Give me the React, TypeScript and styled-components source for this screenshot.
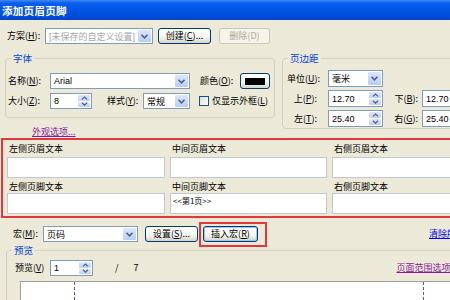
import styled, { createGlobalStyle } from "styled-components";

const GlobalStyle = createGlobalStyle`
  html, body {
    margin: 0;
    padding: 0;
    background: #ece9d8;
  }
  body {
    font-family: "Noto Sans CJK SC", "Liberation Sans", sans-serif;
    font-size: 9px;
    color: #000;
  }
`;

const Chevron = () => (
  <svg width="9" height="7" viewBox="0 0 9 7">
    <path d="M1.5 1.8 L4.5 4.8 L7.5 1.8" fill="none" stroke="#4d6185" strokeWidth="1.6" />
  </svg>
);

const SpinArrow = ({ up }: { up?: boolean }) => (
  <svg width="7" height="4" viewBox="0 0 7 4">
    <path
      d={up ? "M1 3.4 L3.5 1 L6 3.4" : "M1 0.8 L3.5 3.2 L6 0.8"}
      fill="none"
      stroke="#4d6185"
      strokeWidth="1.2"
    />
  </svg>
);

const App = () => {
  return (
    <Window>
      <GlobalStyle />
      <TitleBar>添加页眉页脚</TitleBar>

      {/* 方案 */}
      <Row $top={8} $left={7}>
        <Label $w={38}>
          方案(<u>H</u>):
        </Label>
        <Combo $w={108}>
          <ComboText $disabled>[未保存的自定义设置]</ComboText>
          <DropBtn>
            <Chevron />
          </DropBtn>
        </Combo>
        <Button $w={53} $ml={5}>
          创建(<u>C</u>)...
        </Button>
        <Button $w={51} $ml={8} disabled>
          删除(D)
        </Button>
      </Row>

      <GroupsRow>
        <LeftColumn>
          <Group $w={270} $h={66}>
            <Legend>字体</Legend>
            <Row $top={9} $left={2}>
              <Label $w={42}>
                名称(<u>N</u>):
              </Label>
              <Combo $w={140}>
                <ComboText>Arial</ComboText>
                <DropBtn>
                  <Chevron />
                </DropBtn>
              </Combo>
              <Label $w={40} $ml={10}>
                颜色(<u>O</u>):
              </Label>
              <ColorButton>
                <Swatch />
              </ColorButton>
            </Row>
            <Row $top={4} $left={2}>
              <Label $w={42}>
                大小(<u>Z</u>):
              </Label>
              <Spin $w={42}>
                <ComboText>8</ComboText>
                <SpinBtns>
                  <SpinHalf>
                    <SpinArrow up />
                  </SpinHalf>
                  <SpinHalf>
                    <SpinArrow />
                  </SpinHalf>
                </SpinBtns>
              </Spin>
              <Label $w={36} $ml={15}>
                样式(<u>Y</u>):
              </Label>
              <Combo $w={47}>
                <ComboText>常规</ComboText>
                <DropBtn>
                  <Chevron />
                </DropBtn>
              </Combo>
              <CheckBox $ml={9} />
              <Label $ml={3}>
                仅显示外框(<u>L</u>)
              </Label>
            </Row>
          </Group>
          <Link $visited $ml={27} $top={8}>
            外观选项...
          </Link>
        </LeftColumn>

        <Group $w={180} $h={77} $ml={7}>
          <Legend>页边距</Legend>
          <MarginRow $top={6}>
            <Label $w={30} $right>
              单位(<u>U</u>):
            </Label>
            <Combo $w={55} $ml={11} $h={17}>
              <ComboText>毫米</ComboText>
              <DropBtn>
                <Chevron />
              </DropBtn>
            </Combo>
          </MarginRow>
          <MarginRow $top={3}>
            <Label $w={30} $right>
              上(<u>P</u>):
            </Label>
            <Spin $w={55} $ml={11} $h={17}>
              <ComboText>12.70</ComboText>
              <SpinBtns>
                <SpinHalf>
                  <SpinArrow up />
                </SpinHalf>
                <SpinHalf>
                  <SpinArrow />
                </SpinHalf>
              </SpinBtns>
            </Spin>
            <Label $w={24} $ml={11} $right>
              下(<u>B</u>):
            </Label>
            <Spin $w={60} $ml={4} $h={17}>
              <ComboText>12.70</ComboText>
            </Spin>
          </MarginRow>
          <MarginRow $top={3}>
            <Label $w={30} $right>
              左(<u>T</u>):
            </Label>
            <Spin $w={55} $ml={11} $h={17}>
              <ComboText>25.40</ComboText>
              <SpinBtns>
                <SpinHalf>
                  <SpinArrow up />
                </SpinHalf>
                <SpinHalf>
                  <SpinArrow />
                </SpinHalf>
              </SpinBtns>
            </Spin>
            <Label $w={24} $ml={11} $right>
              右(<u>G</u>):
            </Label>
            <Spin $w={60} $ml={4} $h={17}>
              <ComboText>25.40</ComboText>
            </Spin>
          </MarginRow>
        </Group>
      </GroupsRow>

      {/* 页眉页脚文本 */}
      <HighlightBox>
        <TextGrid>
          <GridLabel>左侧页眉文本</GridLabel>
          <GridLabel>中间页眉文本</GridLabel>
          <GridLabel>右侧页眉文本</GridLabel>
          <TextBox />
          <TextBox />
          <TextBox />
          <GridLabel $end>左侧页脚文本</GridLabel>
          <GridLabel $end>中间页脚文本</GridLabel>
          <GridLabel $end>右侧页脚文本</GridLabel>
          <TextBox />
          <TextBox>&lt;&lt;第1页&gt;&gt;</TextBox>
          <TextBox />
        </TextGrid>
      </HighlightBox>

      {/* 宏 */}
      <Row $top={8} $left={13}>
        <Label $w={30}>
          宏(<u>M</u>):
        </Label>
        <Combo $w={95}>
          <ComboText>页码</ComboText>
          <DropBtn>
            <Chevron />
          </DropBtn>
        </Combo>
        <Button $w={53} $ml={7}>
          设置(<u>S</u>)...
        </Button>
        <ButtonHighlight>
          <Button $w={55} $focused>
            插入宏(<u>R</u>)
          </Button>
        </ButtonHighlight>
        <Link $ml={162}>清除所有宏</Link>
      </Row>

      <PreviewGroup>
        <Legend>预览</Legend>
        <Row $top={4} $left={8}>
          <Label $w={35}>
            预览(<u>V</u>)
          </Label>
          <Spin $w={43}>
            <ComboText>1</ComboText>
            <SpinBtns>
              <SpinHalf>
                <SpinArrow up />
              </SpinHalf>
              <SpinHalf>
                <SpinArrow />
              </SpinHalf>
            </SpinBtns>
          </Spin>
          <Label $ml={22}>/</Label>
          <Label $ml={15}>7</Label>
          <Link $visited $ml={258}>
            页面范围选项...
          </Link>
        </Row>
        <PreviewPage>
          <PageMargins />
        </PreviewPage>
      </PreviewGroup>
    </Window>
  );
};

export default App;

const Window = styled.div`
  width: 450px;
  height: 300px;
  overflow: hidden;
  background: #ece9d8;
`;

const TitleBar = styled.div`
  height: 20px;
  display: flex;
  align-items: center;
  padding-left: 2px;
  background: linear-gradient(
    to bottom,
    #3d8bf5 0%,
    #0a5eeb 15%,
    #0055e5 55%,
    #004ad8 85%,
    #0a43c2 100%
  );
  color: #fff;
  font-size: 10.5px;
  font-weight: bold;
  letter-spacing: 0.3px;
`;

const Row = styled.div<{ $top?: number; $left?: number }>`
  display: flex;
  align-items: center;
  height: 16px;
  margin-top: ${(p) => p.$top ?? 0}px;
  padding-left: ${(p) => p.$left ?? 0}px;
  white-space: nowrap;
`;

const MarginRow = styled(Row)`
  height: 17px;
  padding-left: 4px;
`;

const Label = styled.span<{ $w?: number; $ml?: number; $right?: boolean }>`
  flex-shrink: 0;
  width: ${(p) => (p.$w ? `${p.$w}px` : "auto")};
  margin-left: ${(p) => p.$ml ?? 0}px;
  text-align: ${(p) => (p.$right ? "right" : "left")};
  line-height: 12px;
  white-space: nowrap;
`;

const Combo = styled.div<{ $w: number; $ml?: number; $h?: number }>`
  flex-shrink: 0;
  box-sizing: border-box;
  display: flex;
  align-items: stretch;
  width: ${(p) => p.$w}px;
  height: ${(p) => p.$h ?? 16}px;
  margin-left: ${(p) => p.$ml ?? 0}px;
  border: 1px solid #7f9db9;
  background: #fff;
`;

const Spin = styled(Combo)``;

const ComboText = styled.span<{ $disabled?: boolean }>`
  flex: 1;
  display: flex;
  align-items: center;
  padding-left: 3px;
  overflow: hidden;
  color: ${(p) => (p.$disabled ? "#a7a7a7" : "#000")};
  font-family: "Liberation Sans", "Noto Sans CJK SC", sans-serif;
  font-size: 9px;
  white-space: nowrap;
`;

const DropBtn = styled.span`
  width: 13px;
  margin: 1px;
  display: flex;
  align-items: center;
  justify-content: center;
  border-radius: 1px;
  background: linear-gradient(to bottom, #dce7fd, #b9cdf7);
`;

const SpinBtns = styled.span`
  width: 12px;
  margin: 1px;
  display: flex;
  flex-direction: column;
  gap: 1px;
`;

const SpinHalf = styled.span`
  flex: 1;
  display: flex;
  align-items: center;
  justify-content: center;
  border-radius: 1px;
  background: linear-gradient(to bottom, #dce7fd, #bfd1f8);
`;

const Button = styled.button<{ $w: number; $ml?: number; $focused?: boolean }>`
  flex-shrink: 0;
  box-sizing: border-box;
  width: ${(p) => p.$w}px;
  height: 16px;
  margin-left: ${(p) => p.$ml ?? 0}px;
  padding: 0;
  border: 1px solid #003c74;
  border-radius: 3px;
  background: linear-gradient(to bottom, #ffffff, #f3f3ee 60%, #d8d3c8);
  box-shadow: ${(p) => (p.$focused ? "inset 0 0 0 1px #a9c3f0" : "none")};
  color: #000;
  font-family: inherit;
  font-size: 9px;
  line-height: 12px;
  white-space: nowrap;

  &:disabled {
    border-color: #c9c7ba;
    background: #f5f4ea;
    color: #aca899;
  }
`;

const ColorButton = styled.span`
  box-sizing: border-box;
  width: 30px;
  height: 16px;
  display: flex;
  align-items: center;
  justify-content: center;
  border: 1px solid #003c74;
  border-radius: 3px;
  background: linear-gradient(to bottom, #ffffff, #f3f3ee 60%, #d8d3c8);
`;

const Swatch = styled.span`
  width: 20px;
  height: 7px;
  background: #000;
`;

const CheckBox = styled.span<{ $ml?: number }>`
  box-sizing: border-box;
  width: 10px;
  height: 10px;
  margin-left: ${(p) => p.$ml ?? 0}px;
  border: 1px solid #1c5180;
  background: linear-gradient(135deg, #dcdcd7, #fff);
`;

const GroupsRow = styled.div`
  display: flex;
  align-items: flex-start;
  margin-top: 8px;
  padding-left: 5px;
`;

const LeftColumn = styled.div`
  display: flex;
  flex-direction: column;
  align-items: flex-start;
`;

const Group = styled.fieldset<{ $w: number; $h: number; $ml?: number }>`
  flex-shrink: 0;
  box-sizing: border-box;
  width: ${(p) => p.$w}px;
  height: ${(p) => p.$h}px;
  margin: 0 0 0 ${(p) => p.$ml ?? 0}px;
  padding: 0;
  border: 1px solid #d0d0bf;
  border-radius: 4px;
  min-inline-size: 0;
`;

const Legend = styled.legend`
  margin-left: 5px;
  padding: 0 2px;
  color: #0046d5;
  font-size: 9.5px;
  line-height: 12px;
`;

const Link = styled.span<{ $visited?: boolean; $ml?: number; $top?: number }>`
  margin-left: ${(p) => p.$ml ?? 0}px;
  margin-top: ${(p) => p.$top ?? 0}px;
  color: ${(p) => (p.$visited ? "#8a1c9a" : "#0000ee")};
  text-decoration: underline;
  line-height: 12px;
  white-space: nowrap;
`;

const HighlightBox = styled.div`
  width: 470px;
  margin-left: 1px;
  border: 2px solid #e0383c;
  padding: 0 0 2px 4px;
`;

const TextGrid = styled.div`
  display: grid;
  grid-template-columns: 158px 157px 130px;
  grid-template-rows: 17px 21px 15px 21px;
  column-gap: 5px;
`;

const GridLabel = styled.span<{ $end?: boolean }>`
  align-self: ${(p) => (p.$end ? "end" : "center")};
  padding-left: 2px;
  line-height: 12px;
`;

const TextBox = styled.div`
  box-sizing: border-box;
  padding: 2px 2px;
  border: 1px solid #c3c8cf;
  background: #fff;
  font-size: 8px;
  line-height: 10px;
  white-space: nowrap;
`;

const ButtonHighlight = styled.span`
  flex-shrink: 0;
  display: flex;
  margin-left: 1px;
  padding: 2px 7px 3px 2px;
  border: 2px solid #e0383c;
`;

const PreviewGroup = styled.fieldset`
  box-sizing: border-box;
  width: 480px;
  height: 90px;
  margin: 2px 0 0 6px;
  padding: 0;
  border: 1px solid #d0d0bf;
  border-radius: 4px;
  min-inline-size: 0;
`;

const PreviewPage = styled.div`
  box-sizing: border-box;
  width: 460px;
  height: 40px;
  margin: 5px 0 0 13px;
  padding-left: 53px;
  border: 1px solid #a0a0a0;
  background: #fff;
`;

const PageMargins = styled.div`
  width: 348px;
  height: 100%;
  border-left: 1px dashed #5a5a9a;
  border-right: 1px dashed #5a5a9a;
`;
